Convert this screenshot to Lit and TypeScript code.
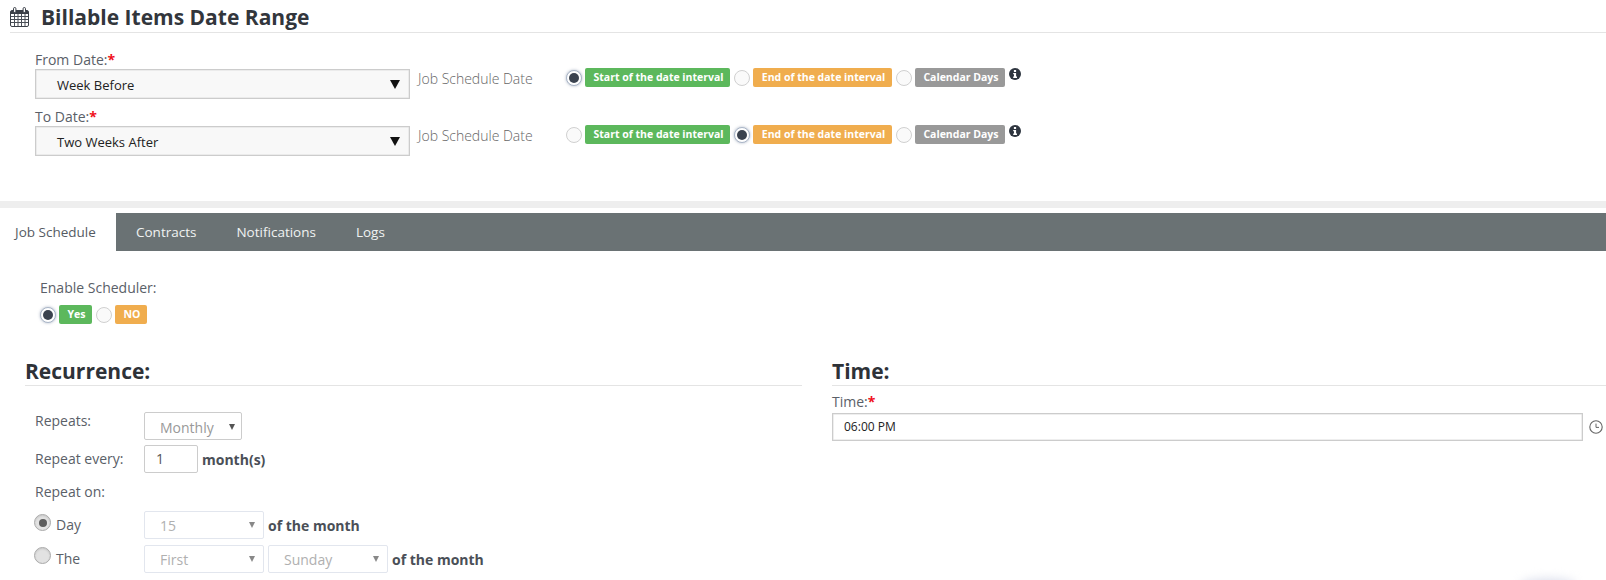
import { LitElement, html, css, svg } from "lit";
import { customElement } from "lit/decorators.js";

const arrow = (w: number, h: number, fill: string) => html`<svg class="arrow" width=${w} height=${h} viewBox="0 0 10 10" preserveAspectRatio="none"><polygon points="0,0 10,0 5,10" fill=${fill}></polygon></svg>`;

const calendar = html`<svg width="19" height="20" viewBox="0 0 19 20">
  <rect x="0.5" y="3.5" width="18" height="16" rx="1.5" fill="#fff" stroke="#3a3f47"></rect>
  <rect x="1" y="4" width="17" height="3" fill="#3a3f47"></rect>
  ${[4.5, 8, 11.5, 15].map((x) => svg`<line x1=${x} y1="7" x2=${x} y2="19" stroke="#4a4f57" stroke-width="1"></line>`)}
  ${[9.5, 12.5, 15.5].map((y) => svg`<line x1="1" y1=${y} x2="18" y2=${y} stroke="#4a4f57" stroke-width="1"></line>`)}
  <rect x="3.5" y="0.5" width="2.4" height="5" rx="1.2" fill="#fff" stroke="#3a3f47"></rect>
  <rect x="13.1" y="0.5" width="2.4" height="5" rx="1.2" fill="#fff" stroke="#3a3f47"></rect>
</svg>`;

const info = html`<svg class="info" width="12" height="12" viewBox="0 0 12 12">
  <circle cx="6" cy="6" r="6" fill="#2f3640"></circle>
  <rect x="4.9" y="2" width="2.2" height="2" fill="#fff"></rect>
  <path d="M4.2 5h2.9v3.6h.9V10H4.2V8.6h.8V6.3h-.8z" fill="#fff"></path>
</svg>`;

const clock = html`<svg class="clock" width="14" height="14" viewBox="0 0 14 14">
  <circle cx="7" cy="7" r="6.2" fill="none" stroke="#666" stroke-width="1.1"></circle>
  <path d="M7 3.6V7.4H10" fill="none" stroke="#666" stroke-width="1"></path>
</svg>`;

@customElement("app-root")
export class AppRoot extends LitElement {
  static styles = css`
    :host {
      display: block;
      position: relative;
      height: 580px;
      overflow: hidden;
      background: #fff;
      font-family: "Open Sans", sans-serif;
      font-size: 14px;
      color: #555b63;
    }
    * { box-sizing: border-box; }
    .title {
      display: flex;
      align-items: center;
      gap: 12px;
      height: 33px;
      margin-left: 10px;
      padding: 3px 0 1px;
      border-bottom: 1px solid #e4e4e4;
    }
    .title h1 {
      margin: 0;
      font-size: 21px;
      font-weight: 700;
      color: #32363c;
      line-height: 26px;
    }
    .dates {
      height: 168px;
      padding: 17px 0 0 35px;
      display: flex;
      flex-direction: column;
      gap: 8px;
    }
    .date-row { display: grid; grid-template-columns: 375px 156px auto; height: 49px; }
    .date-field { display: flex; flex-direction: column; }
    .lbl { line-height: 19px; height: 19px; color: #5a6068; font-size: 14px; }
    .req { color: #f01020; font-weight: 700; }
    .big-select {
      height: 30px;
      border: 1px solid #ccc;
      box-shadow: inset 0 0 0 0.5px #ddd;
      background: #f8f8f8;
      display: flex;
      align-items: center;
      justify-content: space-between;
      padding: 1px 9px 0 21px;
      color: #222;
      font-size: 13px;
    }
    .job { padding: 19px 0 0 8px; line-height: 20px; font-size: 14px; color: #666; font-weight: 300; }
    .opts { display: flex; align-items: flex-start; padding-top: 18px; }
    .opt { display: flex; align-items: center; gap: 3px; margin-right: 4px; height: 19px; }
    .radio {
      display: block;
      width: 16px;
      height: 16px;
      border-radius: 50%;
      border: 1px solid #d0d0d0;
      background: #fafafa;
      flex: none;
    }
    .radio.on {
      border: 1px solid #a9b5c7;
      background: #fff;
      box-shadow: 0 0 3px rgba(120, 135, 160, 0.6);
      display: flex;
      align-items: center;
      justify-content: center;
    }
    .radio.on::after {
      content: "";
      width: 10px;
      height: 10px;
      border-radius: 50%;
      background: #3b434f;
    }
    .tag {
      display: flex;
      align-items: center;
      justify-content: center;
      height: 19px;
      padding: 0 0 1px 2px;
      border-radius: 2px;
      color: #fff;
      font-size: 10.5px;
      font-weight: 700;
      white-space: nowrap;
    }
    .green { background: #5cb85c; }
    .orange { background: #f0ad4e; }
    .gray { background: #999; }
    .w1 { width: 145px; }
    .w2 { width: 139px; }
    .w3 { width: 90px; }
    .w4 { width: 33px; }
    .w5 { width: 32px; }
    .info { display: block; }
    .band { height: 7px; background: #eee; margin-bottom: 5px; }
    .tabs {
      display: flex;
      height: 38px;
      background: #6a7274;
      color: #f0f2f2;
      font-size: 13.5px;
      line-height: 39px;
    }
    .tab.first { background: #fff; color: #555b63; width: 116px; padding: 0 0 0 15px; }
    .tab.c { padding: 0 20px; }
    .sched { padding: 27px 0 0 40px; height: 94px; }
    .sched .lbl { margin-bottom: 7px; line-height: 20px; height: 20px; }
    .sched .opts { padding: 0; }
    .cols { display: grid; grid-template-columns: 777px 1fr; column-gap: 30px; padding-left: 25px; }
    h2 {
      margin: 0;
      font-size: 21px;
      font-weight: 700;
      line-height: 28px;
      height: 41px;
      padding-top: 12px;
      color: #2e3238;
      border-bottom: 1px solid #e4e4e4;
    }
    .rec { padding: 26px 0 0 10px; display: flex; flex-direction: column; }
    .rec-row { display: grid; grid-template-columns: 109px auto 1fr; align-items: center; }
    .rec-row .name { line-height: 20px; color: #5a6068; }
    .r-repeats { height: 28px; }
    .r-repeats .name { margin-top: -10px; }
    .r-every { height: 28px; margin-top: 5px; }
    .r-on { height: 38px; }
    .r-day { height: 28px; }
    .r-the { height: 28px; margin-top: 6px; }
    .r-the .nat { margin-top: -7px; }
    .inline { display: flex; align-items: center; gap: 4px; }
    .sel {
      height: 28px;
      border: 1px solid #ccc;
      border-radius: 2px;
      background: #fff;
      display: flex;
      align-items: center;
      justify-content: space-between;
      color: #999;
      font-size: 14px;
    }
    .sel.mon { width: 98px; padding: 2px 6px 0 15px; }
    .sel.dis { width: 120px; padding: 0 8px 0 15px; border-color: #e2e6ee; color: #b0b0b0; }
    .num {
      width: 54px;
      height: 28px;
      border: 1px solid #ccc;
      border-radius: 2px;
      padding-left: 11px;
      line-height: 26px;
      color: #555;
      font-size: 14px;
    }
    b { font-weight: 700; color: #4a4f57; font-size: 14px; }
    .nat {
      width: 17px;
      height: 17px;
      border-radius: 50%;
      border: 1px solid #aaa;
      background: #e2e2e2;
      box-shadow: inset 0 1px 2px rgba(0, 0, 0, 0.12);
      display: flex;
      align-items: center;
      justify-content: center;
      flex: none;
      margin-top: -5px;
    }
    .nat.on::after {
      content: "";
      width: 8px;
      height: 8px;
      border-radius: 50%;
      background: #5c5c5c;
    }
    .radio-cell { display: flex; align-items: center; gap: 5px; margin-left: -1px; }
    .time .lbl { margin-top: 6px; }
    .time .row { display: flex; align-items: center; gap: 6px; margin-top: 2px; }
    .time-input {
      width: 751px;
      height: 28px;
      border: 1px solid #ccc;
      box-shadow: inset 0 0 0 0.5px #ddd;
      padding-left: 11px;
      line-height: 26px;
      font-size: 12px;
      color: #222;
    }
    .clock { display: block; }
    .blob {
      position: absolute;
      left: 1520px;
      top: 578px;
      width: 56px;
      height: 14px;
      border-radius: 50%;
      background: #dfe2ee;
      filter: blur(5px);
    }
  `;

  private opts(sel: number) {
    const items: [string, string, string][] = [
      ["Start of the date interval", "green", "w1"],
      ["End of the date interval", "orange", "w2"],
      ["Calendar Days", "gray", "w3"],
    ];
    return html`<div class="opts">
      ${items.map(
        ([t, c, w], i) => html`<div class="opt">
          <span class="radio ${i === sel ? "on" : ""}"></span>
          <span class="tag ${c} ${w}">${t}</span>
        </div>`
      )}
      ${info}
    </div>`;
  }

  private dateRow(label: string, value: string, sel: number) {
    return html`<div class="date-row">
      <div class="date-field">
        <div class="lbl">${label}<span class="req">*</span></div>
        <div class="big-select"><span>${value}</span>${arrow(10, 9, "#111")}</div>
      </div>
      <div class="job">Job Schedule Date</div>
      ${this.opts(sel)}
    </div>`;
  }

  render() {
    return html`
      <div class="title">${calendar}<h1>Billable Items Date Range</h1></div>
      <div class="dates">
        ${this.dateRow("From Date:", "Week Before", 0)}
        ${this.dateRow("To Date:", "Two Weeks After", 1)}
      </div>
      <div class="band"></div>
      <div class="tabs">
        <div class="tab first">Job Schedule</div>
        <div class="tab c">Contracts</div>
        <div class="tab c">Notifications</div>
        <div class="tab c">Logs</div>
      </div>
      <div class="sched">
        <div class="lbl">Enable Scheduler:</div>
        <div class="opts">
          <div class="opt"><span class="radio on"></span><span class="tag green w4">Yes</span></div>
          <div class="opt"><span class="radio"></span><span class="tag orange w5">NO</span></div>
        </div>
      </div>
      <div class="cols">
        <div>
          <h2>Recurrence:</h2>
          <div class="rec">
            <div class="rec-row r-repeats">
              <div class="name">Repeats:</div>
              <div class="sel mon"><span>Monthly</span>${arrow(6, 6, "#555")}</div>
              <div></div>
            </div>
            <div class="rec-row r-every">
              <div class="name">Repeat every:</div>
              <div class="inline"><div class="num">1</div><b>month(s)</b></div>
              <div></div>
            </div>
            <div class="rec-row r-on">
              <div class="name">Repeat on:</div><div></div><div></div>
            </div>
            <div class="rec-row r-day">
              <div class="radio-cell"><span class="nat on"></span><span class="name">Day</span></div>
              <div class="inline"><div class="sel dis"><span>15</span>${arrow(6, 6, "#888")}</div><b>of the month</b></div>
              <div></div>
            </div>
            <div class="rec-row r-the">
              <div class="radio-cell"><span class="nat"></span><span class="name">The</span></div>
              <div class="inline">
                <div class="sel dis"><span>First</span>${arrow(6, 6, "#888")}</div>
                <div class="sel dis"><span>Sunday</span>${arrow(6, 6, "#888")}</div>
                <b>of the month</b>
              </div>
              <div></div>
            </div>
          </div>
        </div>
        <div class="time">
          <h2>Time:</h2>
          <div class="lbl">Time:<span class="req">*</span></div>
          <div class="row"><div class="time-input">06:00 PM</div>${clock}</div>
        </div>
      </div>
      <div class="blob"></div>
    `;
  }
}
